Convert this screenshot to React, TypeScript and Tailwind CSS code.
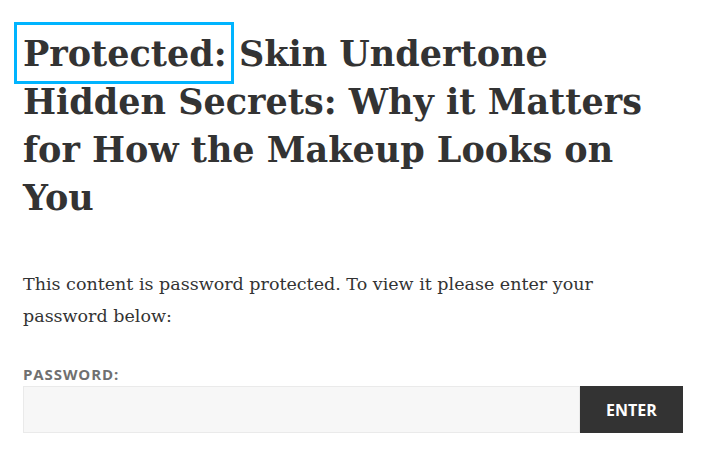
export default function App() {
  return (
    <div className="min-h-screen bg-white px-[23px] pt-[30px] text-[#333]">
      <h1 className="font-['DejaVu_Serif',serif] text-[35px] font-bold leading-[48px]">
        <a
          href="#"
          className="-ml-[9px] -mr-[7px] border-[3px] border-[#00b4ff] pl-[6px] pr-[4px] pt-[8px] pb-[7px] no-underline"
        >
          Protected:
        </a>{" "}
        Skin Undertone Hidden Secrets: Why it Matters for How the Makeup Looks on You
      </h1>
      <p className="mt-[46px] font-['DejaVu_Serif',serif] text-[17.5px] leading-[32px]">
        This content is password protected. To view it please enter your password below:
      </p>
      <form className="mt-[32px]" onSubmit={(e) => e.preventDefault()}>
        <label className="block font-['Open_Sans',sans-serif] text-[15px] font-bold uppercase leading-[20px] tracking-[0.06em] text-[#707070]">
          Password:
        </label>
        <div className="mt-[2px] flex w-[660px]">
          <input
            type="password"
            className="h-[47px] flex-1 border border-[#eaeaea] bg-[#f7f7f7] px-3"
          />
          <button className="h-[47px] w-[103px] bg-[#333] font-['Open_Sans',sans-serif] text-[16px] font-bold uppercase text-white">
            Enter
          </button>
        </div>
      </form>
    </div>
  );
}
